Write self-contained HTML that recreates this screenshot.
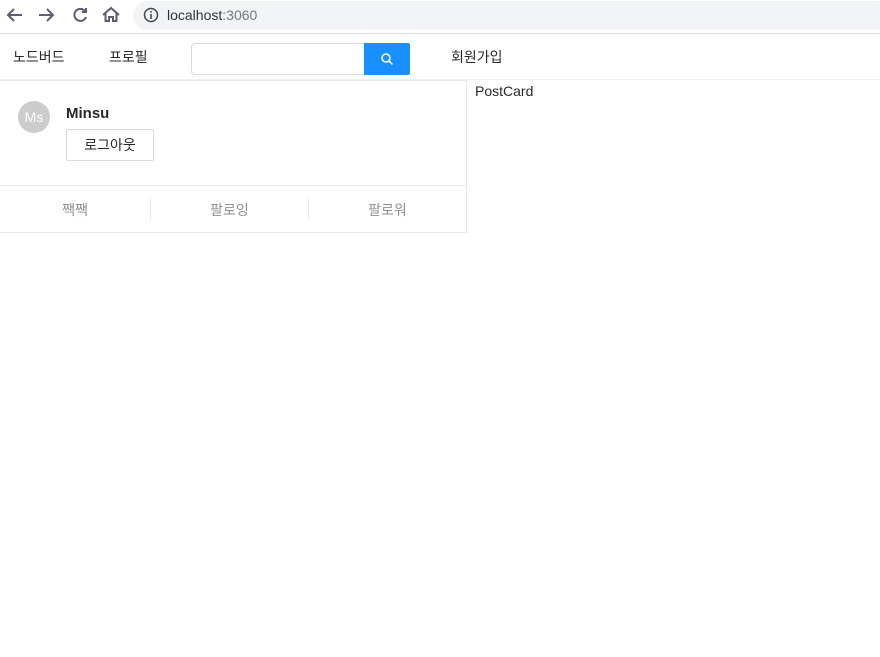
<!DOCTYPE html>
<html><head><meta charset="utf-8"><style>
body{margin:0;width:880px;height:657px;background:#fff;font-family:"Liberation Sans","Noto Sans CJK KR",sans-serif;position:relative;overflow:hidden;color:rgba(0,0,0,.85)}
.a{position:absolute}
</style></head><body>
<div class="a" style="left:0;top:0;width:880px;height:33px;background:#fff;border-bottom:1px solid #dadce0"></div>
<svg class="a" style="left:0;top:0" width="130" height="32" fill="none" stroke="#5f5b73" stroke-width="2">
<path d="M22 15H8M14 9l-6 6 6 6"/>
<path d="M39 15h14M47 9l6 6-6 6"/>
<path d="M85 11a6 6 0 1 0 1 6" /><path d="M86 8v4h-4"/>
<path d="M103 15l8-7 8 7M105.5 13v8h3.5v-4h4v4h3.5v-8"/>
</svg>
<div class="a" style="left:133px;top:1px;width:760px;height:29px;border-radius:15px;background:#f1f3f4"></div>
<svg class="a" style="left:143px;top:7px" width="16" height="16"><circle cx="8" cy="8" r="6.5" fill="none" stroke="#444" stroke-width="1.5"/><rect x="7.2" y="7" width="1.6" height="5" fill="#444"/><rect x="7.2" y="4" width="1.6" height="1.6" fill="#444"/></svg>
<div class="a" style="left:167px;top:7px;font-size:14px;color:#333">localhost<span style="color:#777">:3060</span></div>
<div class="a" style="left:0;top:79px;width:880px;height:1px;background:#f0f0f0"></div>
<div class="a" style="left:13px;top:47px;font-size:14px">노드버드</div>
<div class="a" style="left:109px;top:47px;font-size:14px">프로필</div>
<div class="a" style="left:191px;top:43px;width:172px;height:30px;border:1px solid #d9d9d9;border-radius:4px 0 0 4px"></div>
<div class="a" style="left:364px;top:43px;width:46px;height:32px;background:#1890ff;border-radius:0 2px 2px 0"></div>
<svg class="a" style="left:380px;top:52px" width="14" height="14" fill="none" stroke="#fff" stroke-width="1.5"><circle cx="6" cy="6" r="4"/><path d="M9 9l3.5 3.5"/></svg>
<div class="a" style="left:451px;top:47px;font-size:14px">회원가입</div>
<div class="a" style="left:-1px;top:80px;width:468px;height:153px;border:1px solid #e8e8e8;box-sizing:border-box"></div>
<div class="a" style="left:18px;top:101px;width:32px;height:32px;border-radius:50%;background:#ccc;color:#fff;font-size:14px;line-height:32px;text-align:center">Ms</div>
<div class="a" style="left:66px;top:105px;font-size:15px;font-weight:600;color:rgba(0,0,0,.85)">Minsu</div>
<div class="a" style="left:66px;top:129px;width:88px;height:32px;border:1px solid #d9d9d9;border-radius:2px;box-sizing:border-box;font-size:14px;line-height:30px;text-align:center">로그아웃</div>
<div class="a" style="left:0;top:185px;width:466px;height:1px;background:#e8e8e8"></div>
<div class="a" style="left:150px;top:198px;width:1px;height:22px;background:#e8e8e8"></div>
<div class="a" style="left:308px;top:198px;width:1px;height:22px;background:#e8e8e8"></div>
<div class="a" style="left:0;top:200px;width:150px;text-align:center;font-size:14px;color:rgba(0,0,0,.45)">짹짹</div>
<div class="a" style="left:151px;top:200px;width:157px;text-align:center;font-size:14px;color:rgba(0,0,0,.45)">팔로잉</div>
<div class="a" style="left:309px;top:200px;width:157px;text-align:center;font-size:14px;color:rgba(0,0,0,.45)">팔로워</div>
<div class="a" style="left:475px;top:83px;font-size:14px">PostCard</div>
</body></html>
